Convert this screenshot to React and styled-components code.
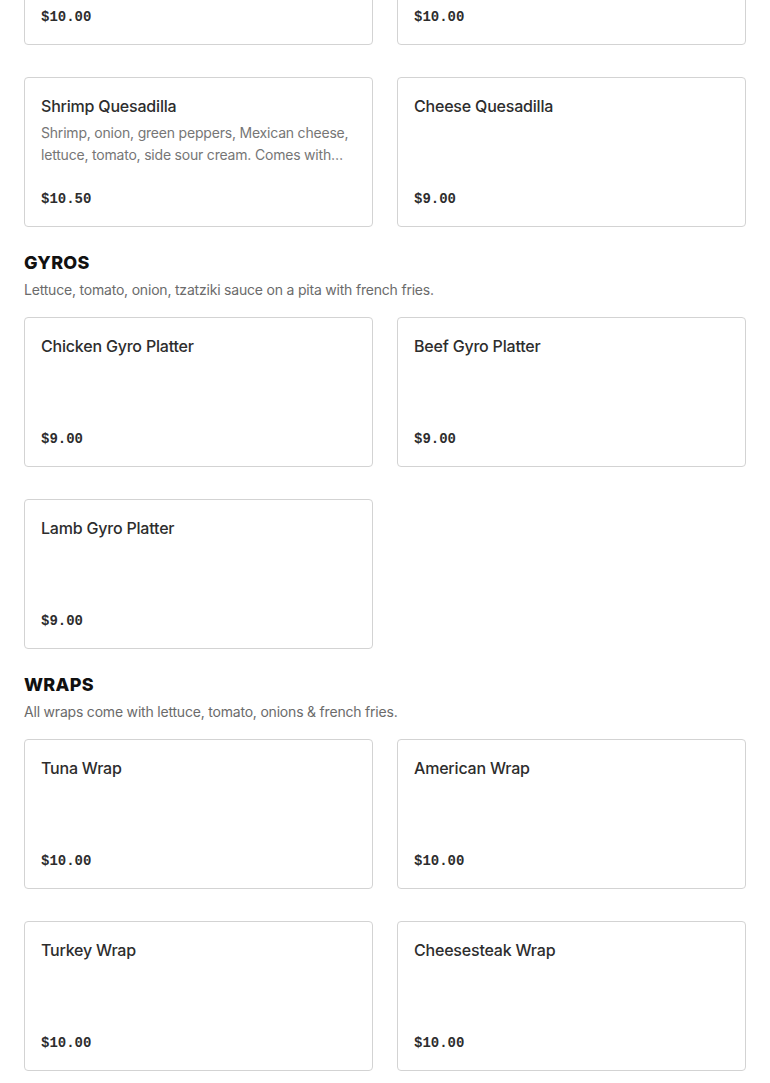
import styled, { createGlobalStyle } from "styled-components";

const GlobalStyles = createGlobalStyle`
  html, body {
    margin: 0;
    padding: 0;
    background: #ffffff;
  }
  body {
    font-family: "Inter", "Noto Sans", sans-serif;
    color: #2d2d2d;
    overflow: hidden;
  }
`;

const sections = [
  {
    id: "quesadillas",
    items: [
      { name: "Chicken Quesadilla", price: "$10.00" },
      { name: "Steak Quesadilla", price: "$10.00" },
      {
        name: "Shrimp Quesadilla",
        description:
          "Shrimp, onion, green peppers, Mexican cheese, lettuce, tomato, side sour cream. Comes with french fries.",
        price: "$10.50",
      },
      { name: "Cheese Quesadilla", price: "$9.00" },
    ],
  },
  {
    id: "gyros",
    title: "GYROS",
    subtitle: "Lettuce, tomato, onion, tzatziki sauce on a pita with french fries.",
    items: [
      { name: "Chicken Gyro Platter", price: "$9.00" },
      { name: "Beef Gyro Platter", price: "$9.00" },
      { name: "Lamb Gyro Platter", price: "$9.00" },
    ],
  },
  {
    id: "wraps",
    title: "WRAPS",
    subtitle: "All wraps come with lettuce, tomato, onions & french fries.",
    items: [
      { name: "Tuna Wrap", price: "$10.00" },
      { name: "American Wrap", price: "$10.00" },
      { name: "Turkey Wrap", price: "$10.00" },
      { name: "Cheesesteak Wrap", price: "$10.00" },
    ],
  },
];

function App() {
  return (
    <>
      <GlobalStyles />
      <Menu>
        {sections.map((section) => (
          <Section key={section.id}>
            {section.title && (
              <SectionHeader>
                <SectionTitle>{section.title}</SectionTitle>
                <SectionSubtitle>{section.subtitle}</SectionSubtitle>
              </SectionHeader>
            )}
            <Grid>
              {section.items.map((item) => (
                <Card key={item.name}>
                  <ItemName>{item.name}</ItemName>
                  {item.description && <ItemDesc>{item.description}</ItemDesc>}
                  <Price>{item.price}</Price>
                </Card>
              ))}
            </Grid>
          </Section>
        ))}
      </Menu>
    </>
  );
}

const Menu = styled.main`
  display: flex;
  flex-direction: column;
  gap: 24px;
  padding: 0 24px;
  margin-top: -105px;
`;

const Section = styled.section`
  display: flex;
  flex-direction: column;
  gap: 17px;
`;

const SectionHeader = styled.header`
  display: flex;
  flex-direction: column;
  gap: 5px;
`;

const SectionTitle = styled.h2`
  margin: 0;
  font-family: "Inter", sans-serif;
  font-size: 18px;
  line-height: 24px;
  font-weight: 800;
  letter-spacing: 0.3px;
  color: #111111;
`;

const SectionSubtitle = styled.p`
  margin: 0;
  font-size: 14px;
  line-height: 20px;
  letter-spacing: -0.2px;
  color: #6b6b6b;
`;

const Grid = styled.div`
  display: grid;
  grid-template-columns: 1fr 1fr;
  column-gap: 24px;
  row-gap: 32px;
`;

const Card = styled.article`
  box-sizing: border-box;
  height: 150px;
  padding: 16px 16px 15px;
  border: 1px solid #d3d3d3;
  border-radius: 4px;
  display: flex;
  flex-direction: column;
  background: #ffffff;
`;

const ItemName = styled.h3`
  margin: 0;
  font-size: 16px;
  line-height: 24px;
  font-weight: 500;
  letter-spacing: -0.2px;
  color: #2d2d2d;
`;

const ItemDesc = styled.p`
  margin: 4px 0 0;
  font-size: 14px;
  line-height: 22px;
  letter-spacing: -0.2px;
  color: #767676;
  display: -webkit-box;
  -webkit-line-clamp: 2;
  -webkit-box-orient: vertical;
  overflow: hidden;
`;

const Price = styled.span`
  margin-top: auto;
  font-family: "Liberation Mono", monospace;
  font-size: 14px;
  line-height: 24px;
  font-weight: 700;
  color: #2d2d2d;
`;

export default App;
